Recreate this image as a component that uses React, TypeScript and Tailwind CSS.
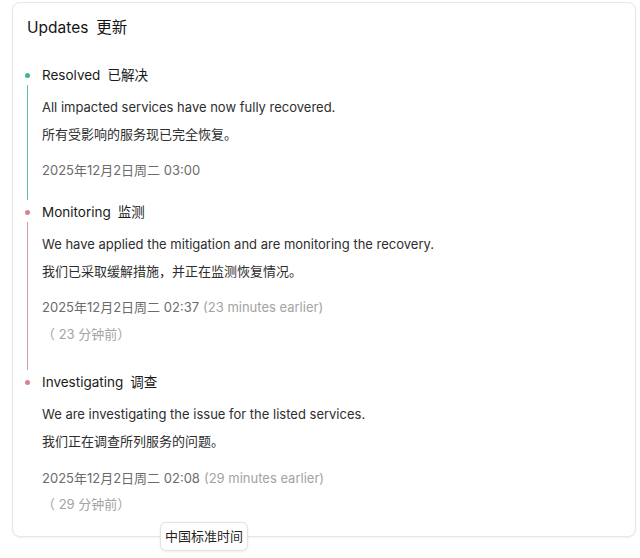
const FONT = 'font-["Inter","Noto_Sans_CJK_SC",sans-serif]';

type Update = {
  status: string;
  statusZh: string;
  dot: string;
  line: string | null;
  en: string;
  zh: string;
  time: string;
  ago?: string;
  agoZh?: string;
  dateGap: string;
  agoLead: string;
  pad: string;
};

const updates: Update[] = [
  {
    status: 'Resolved',
    statusZh: '已解决',
    dot: 'bg-[#3fb68b]',
    line: 'bg-[#62c7a0]',
    en: 'All impacted services have now fully recovered.',
    zh: '所有受影响的服务现已完全恢复。',
    time: '2025年12月2日周二 03:00',
    dateGap: 'mt-[10px]',
    agoLead: 'leading-[25px]',
    pad: 'pb-[18px]',
  },
  {
    status: 'Monitoring',
    statusZh: '监测',
    dot: 'bg-[#d9828f]',
    line: 'bg-[#c99da1]',
    en: 'We have applied the mitigation and are monitoring the recovery.',
    zh: '我们已采取缓解措施，并正在监测恢复情况。',
    time: '2025年12月2日周二 02:37',
    ago: '(23 minutes earlier)',
    agoZh: '（ 23 分钟前）',
    dateGap: 'mt-[10px]',
    agoLead: 'leading-[26px]',
    pad: 'pb-[25px]',
  },
  {
    status: 'Investigating',
    statusZh: '调查',
    dot: 'bg-[#d9828f]',
    line: null,
    en: 'We are investigating the issue for the listed services.',
    zh: '我们正在调查所列服务的问题。',
    time: '2025年12月2日周二 02:08',
    ago: '(29 minutes earlier)',
    agoZh: '（ 29 分钟前）',
    dateGap: 'mt-[11px]',
    agoLead: 'leading-[25px]',
    pad: 'pb-0',
  },
];

function UpdateItem({ u }: { u: Update }) {
  return (
    <div className="flex gap-[9px]">
      <div className="flex w-[11px] flex-col items-center">
        <div className="flex h-[20px] items-center">
          <span className={`block h-[5px] w-[5px] rounded-full ${u.dot}`} />
        </div>
        {u.line ? <div className={`mb-[2px] w-px flex-1 ${u.line}`} /> : null}
      </div>
      <div className={`flex-1 ${u.pad}`}>
        <h3 className="text-[13.5px] leading-[20px] font-normal text-[#1a1a1a]">
          {u.status}
          <span className="ml-[7px]">{u.statusZh}</span>
        </h3>
        <p className="mt-[9px] text-[13px] leading-[27px] text-[#2e2e2e]">{u.en}</p>
        <p className="text-[13px] leading-[26px] text-[#2e2e2e]">{u.zh}</p>
        <div className={`${u.dateGap} text-[13px] leading-[27px]`}>
          <span className="text-[#6b6b6b]">{u.time}</span>
          {u.ago ? <span className="ml-[4px] text-[#a3a3a3]">{u.ago}</span> : null}
        </div>
        {u.agoZh ? (
          <div className={`text-[13px] ${u.agoLead} text-[#a3a3a3]`}>{u.agoZh}</div>
        ) : null}
      </div>
    </div>
  );
}

export default function App() {
  return (
    <main className={`min-h-[558px] w-[640px] bg-white ${FONT}`}>
      <section className="relative mt-[2px] ml-[12px] w-[624px] rounded-[8px] border border-[#e6e6e6] bg-white pt-[13px] pr-[14px] pb-[19px] pl-[9px] shadow-[0_1px_2px_rgba(0,0,0,0.05)]">
        <h2 className="pl-[5px] text-[15.5px] leading-[24px] font-normal text-[#141414]">
          Updates<span className="ml-[8px]">更新</span>
        </h2>
        <div className="mt-[25px] flex flex-col">
          {updates.map((u) => (
            <UpdateItem key={u.status} u={u} />
          ))}
        </div>
        <div className="absolute top-[519px] left-[147px] rounded-[6px] border border-[#e2e2e2] bg-white px-[4px] text-[13px] leading-[27px] text-[#1f1f1f] shadow-[0_1px_3px_rgba(0,0,0,0.08)]">
          中国标准时间
        </div>
      </section>
    </main>
  );
}
